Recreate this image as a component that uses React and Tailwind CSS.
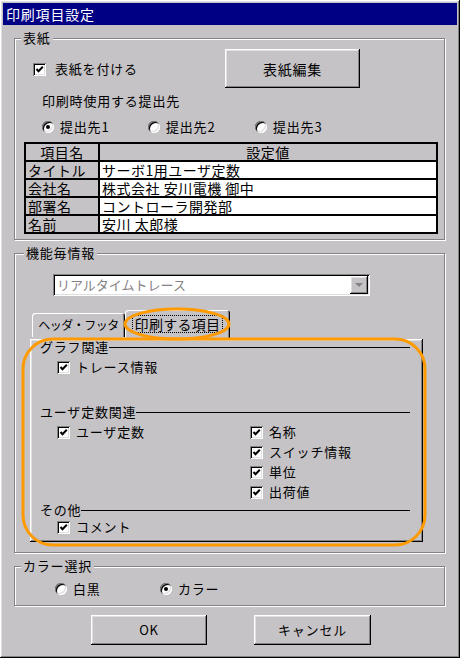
import React from 'react'

const raised = 'shadow-[inset_-1px_-1px_#000,inset_1px_1px_#fff,inset_-2px_-2px_#848284,inset_2px_2px_#dfdfdf]'
const sunken = 'shadow-[inset_1px_1px_#848284,inset_-1px_-1px_#fff,inset_2px_2px_#000,inset_-2px_-2px_#dfdfdf]'

function Check() {
  return (
    <span className={`flex h-[13px] w-[13px] shrink-0 items-center justify-center bg-white ${sunken}`}>
      <svg width="9" height="9" viewBox="0 0 9 9">
        <polyline points="1.5,4 3.5,6.2 7.8,1.8" fill="none" stroke="#000" strokeWidth="2" />
      </svg>
    </span>
  )
}

function CheckItem({ label, className = '' }) {
  return (
    <div className={`flex h-[16px] items-center gap-[6px] ${className}`}>
      <Check />
      <span>{label}</span>
    </div>
  )
}

function Radio({ on, label, className = '' }) {
  return (
    <div className={`flex h-[16px] items-center gap-[6px] ${className}`}>
      <span className="flex h-[12px] w-[12px] shrink-0 items-center justify-center rounded-full bg-white shadow-[inset_1px_1px_#848284,inset_-1px_-1px_#fff,inset_2px_2px_#000,inset_-2px_-2px_#dfdfdf]">
        {on && <span className="h-[4px] w-[4px] rounded-full bg-black" />}
      </span>
      <span>{label}</span>
    </div>
  )
}

function Group({ label, className = '', legendClass = 'ml-[6px]', children }) {
  return (
    <fieldset className={`border border-[#848284] shadow-[inset_1px_1px_#fff,1px_1px_#fff] ${className}`}>
      <legend className={`bg-[#c6c3c6] px-[2px] leading-[16px] ${legendClass}`}>{label}</legend>
      {children}
    </fieldset>
  )
}

function SectionTitle({ label, className = '' }) {
  return (
    <div className={`flex h-[16px] items-center pl-[10px] pr-[13px] ${className}`}>
      <span>{label}</span>
      <span className="flex-1 border-t border-black" />
    </div>
  )
}

export default function App() {
  const rows = [
    ['タイトル', 'サーボ1用ユーザ定数'],
    ['会社名', '株式会社 安川電機 御中'],
    ['部署名', 'コントローラ開発部'],
    ['名前', '安川 太郎様'],
  ]

  return (
    <div className={`relative h-[658px] w-[460px] bg-[#c6c3c6] p-[3px] font-['Noto_Sans_CJK_JP',sans-serif] text-[13px] leading-[16px] tracking-[0.8px] text-black ${raised}`}>
      <div className="h-[22px] bg-[#000084] pl-[3px] text-[14px] leading-[22px] text-white">印刷項目設定</div>

      <div className="pl-[11px] pr-[12px]">
        {/* 表紙 */}
        <Group label="表紙" className="mt-[5px] pb-[5px]">
          <div className="mt-[3px] flex">
            <div className="w-[210px] pl-[18px] pt-[12px]">
              <div className="flex h-[16px] items-center gap-[9px]">
                <Check />
                <span>表紙を付ける</span>
              </div>
            </div>
            <button className={`h-[39px] w-[135px] bg-[#c6c3c6] text-[14px] ${raised}`}>表紙編集</button>
          </div>
          <div className="mt-[5px] pl-[27px]">印刷時使用する提出先</div>
          <div className="mt-[10px] flex pl-[27px]">
            <Radio on label="提出先1" className="w-[106px]" />
            <Radio label="提出先2" className="w-[107px]" />
            <Radio label="提出先3" />
          </div>
          <table className="ml-[9px] mt-[7px] w-[414px] border-collapse border-2 border-black text-[14px] leading-[16px] tracking-[0.5px]">
            <tbody>
              <tr className="bg-[#c6c3c6]">
                <td className="h-[16px] w-[74px] border-2 border-black text-center">項目名</td>
                <td className="h-[16px] border-2 border-black text-center">設定値</td>
              </tr>
              {rows.map(([k, v]) => (
                <tr key={k}>
                  <td className="h-[16px] border-2 border-black bg-[#c6c3c6] pl-[2px]">{k}</td>
                  <td className="h-[16px] border-2 border-black bg-white pl-[2px]">{v}</td>
                </tr>
              ))}
            </tbody>
          </table>
        </Group>

        {/* 機能毎情報 */}
        <Group label="機能毎情報" legendClass="ml-[9px]" className="mt-[5px] pb-[10px]">
          <div className={`ml-[38px] mt-[13px] flex h-[22px] w-[317px] items-center bg-white p-[2px] ${sunken}`}>
            <span className="flex-1 pl-[2px] tracking-normal text-[#848284] [text-shadow:1px_1px_#fff]">リアルタイムトレース</span>
            <span className={`flex h-[18px] w-[18px] items-center justify-center bg-[#c6c3c6] ${raised}`}>
              <svg width="8" height="5" viewBox="0 0 8 5"><polygon points="0,0 8,0 4,4" fill="#848284" /></svg>
            </span>
          </div>

          <div className="ml-[15px] mt-[14px] w-[393px]">
            <div className="flex h-[27px] items-end pl-[2px]">
              <div className="flex h-[24px] w-[93px] items-center justify-center whitespace-nowrap rounded-t-[3px] bg-[#c6c3c6] text-[12px] tracking-[-0.5px] shadow-[inset_1px_1px_#fff,inset_-1px_0_#000,inset_-2px_0_#848284]">
                ヘッダ・フッタ
              </div>
              <div className="relative z-10 -mb-[2px] flex h-[29px] w-[105px] items-center justify-center whitespace-nowrap rounded-t-[3px] bg-[#c6c3c6] pb-[2px] shadow-[inset_1px_1px_#fff,inset_-1px_0_#000,inset_-2px_0_#848284]">
                <span className="border border-dotted border-black px-[2px] text-[14px] tracking-[0.3px]">印刷する項目</span>
              </div>
            </div>
            <div className={`h-[203px] bg-[#c6c3c6] ${raised}`}>
              <SectionTitle label="グラフ関連" className="mt-[2px]" />
              <CheckItem label="トレース情報" className="ml-[27px] mt-[4px]" />
              <SectionTitle label="ユーザ定数関連" className="mt-[29px]" />
              <div className="mt-[2px] flex">
                <div className="w-[220px] pl-[27px]">
                  <div className="flex h-[20px] items-center"><CheckItem label="ユーザ定数" /></div>
                </div>
                <div>
                  {['名称', 'スイッチ情報', '単位', '出荷値'].map((t) => (
                    <div key={t} className="flex h-[20px] items-center"><CheckItem label={t} /></div>
                  ))}
                </div>
              </div>
              <SectionTitle label="その他" />
              <CheckItem label="コメント" className="ml-[27px] mt-[1px]" />
            </div>
          </div>
        </Group>

        {/* カラー選択 */}
        <Group label="カラー選択" className="mt-[5px] pb-[8px]">
          <div className="mt-[7px] flex pl-[40px]">
            <Radio label="白黒" className="w-[105px]" />
            <Radio on label="カラー" />
          </div>
        </Group>

        <div className="mt-[9px] flex gap-[47px] pl-[77px]">
          <button className={`h-[30px] w-[116px] bg-[#c6c3c6] ${raised}`}>OK</button>
          <button className={`h-[30px] w-[117px] bg-[#c6c3c6] ${raised}`}>キャンセル</button>
        </div>
      </div>

      {/* orange annotations */}
      <svg className="pointer-events-none absolute inset-0 z-20" width="460" height="658">
        <ellipse cx="177" cy="324" rx="52" ry="15" fill="none" stroke="#ff9a00" strokeWidth="3" />
        <rect x="23" y="339" width="402" height="206" rx="30" fill="none" stroke="#ff9a00" strokeWidth="3" />
      </svg>
    </div>
  )
}
